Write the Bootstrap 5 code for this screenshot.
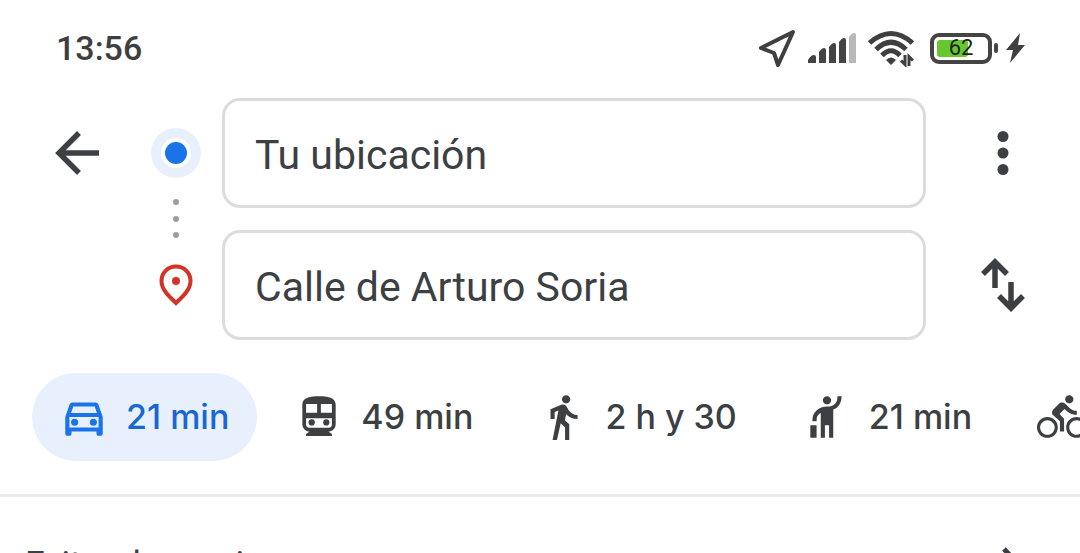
<!DOCTYPE html>
<html lang="es">
<head>
<meta charset="utf-8">
<meta name="viewport" content="width=device-width, initial-scale=1">
<title>Cómo llegar</title>
<link href="https://cdn.jsdelivr.net/npm/bootstrap@5.3.0/dist/css/bootstrap.min.css" rel="stylesheet">
<style>
  body { font-family: Roboto, sans-serif; color: #3c4043; background: #fff; }
  svg { display: block; flex: none; }
  .status-bar { height: 98px; padding: 0 54px 2px 56px; color: #3f3f3f; }
  .clock { font-size: 34px; font-weight: 500; line-height: 40px; }
  .status-icons { gap: 12px; }
  .battery { width: 62px; height: 31px; border: 4px solid #444; border-radius: 9px; }
  .battery-level { width: 31px; height: 17px; left: 3px; top: 3px; border-radius: 3px; background: #66c72e; }
  .battery-text { font-size: 22px; line-height: 24px; color: #222; }
  .battery-cap { width: 4px; height: 10px; margin: 0 8px 0 2px; border-radius: 2px; background: #444; }
  .back-col { width: 130px; height: 110px; padding-left: 55px; }
  .stops-col { width: 92px; }
  .stop-box { height: 110px; }
  .stop-dots { height: 22px; }
  .fields { gap: 22px; }
  .stop-field { height: 110px; border: 3px solid #dadce0; border-radius: 18px; padding: 4px 30px 0; font-size: 41px; line-height: 48px; color: #3c4043; }
  .actions-col { width: 154px; gap: 22px; }
  .actions-col .btn { height: 110px; }
  .plain-btn { border: 0; border-radius: 0; padding: 0; color: #3c4043; }
  .modes { gap: 10px; padding: 33px 0 33px 32px; border-bottom: 3px solid #e8eaed; }
  .mode { height: 88px; padding: 0 28px 0 27px; gap: 17px; border: 0; border-radius: 44px; color: #3c4043; font-family: Inter, sans-serif; font-size: 34px; line-height: 44px; font-weight: 500; }
  .mode.active, .mode.active:hover { background: #e8f0fe; color: #1967d2; }
  .mode.active svg { color: #1a73e8; }
  .option-row { padding: 44px 58px 40px 25px; font-size: 35px; line-height: 48px; color: #3c4043; }
</style>
</head>
<body>
<div class="vh-100 overflow-hidden d-flex flex-column">
  <header class="status-bar d-flex align-items-center justify-content-between flex-shrink-0">
    <div class="clock">13:56</div>
    <div class="status-icons d-flex align-items-center">
      <svg width="38" height="38" viewBox="0 0 38 38" fill="none" stroke="#3f3f3f" stroke-width="4" stroke-linejoin="round"><path d="M35 3 3 19l13 5 4 12z"/></svg>
      <svg width="48" height="32" viewBox="0 0 48 32" fill="#444"><path d="M0 31v-3q3-5 6-5 2 0 2 2v6zM11 31V20q3-4 5-4 2 0 2 2v13zM21 31V15q3-4 5-4 2 0 2 2v18zM31 31V10q3-4 5-4 2 0 2 2v23z"/><path d="M41 31V5q3-4 5-4 2 0 2 2v28z" fill="#b8b8b8"/></svg>
      <svg width="46" height="38" viewBox="0 0 46 38" fill="none" stroke="#3f3f3f" stroke-width="5"><path d="M1.500 14Q23-5 44.500 14M8 20.500Q23 6 38 20.500M14 26.500Q23 17 32 26.500"/><path d="M18 31q5-5 10 0l-5 5z" fill="#3f3f3f" stroke="none"/><path d="m33 31.500 4 4V26M45 31.500l-4-4V37" stroke-width="3"/></svg>
      <div class="d-flex align-items-center ms-1">
        <div class="battery position-relative d-flex justify-content-center align-items-center">
          <span class="battery-level position-absolute"></span><span class="battery-text position-relative">62</span>
        </div>
        <span class="battery-cap"></span>
        <svg width="20" height="30" viewBox="0 0 20 30" fill="#3f3f3f"><path d="M14 0 0 17h7L4 30l15-18h-7z"/></svg>
      </div>
    </div>
  </header>

  <main>
    <form class="d-flex">
      <div class="back-col d-flex align-items-center">
        <button type="button" class="btn plain-btn" aria-label="Atrás"><svg width="46" height="46" viewBox="0 0 46 46" fill="none" stroke="currentColor" stroke-width="5.500"><path d="M44 23H4M24 3 4 23l20 20"/></svg></button>
      </div>
      <div class="stops-col d-flex flex-column align-items-center">
        <div class="stop-box d-flex align-items-center"><svg width="50" height="50" viewBox="0 0 50 50"><circle cx="25" cy="25" r="25" fill="#e8f0fe"/><circle cx="25" cy="25" r="15" fill="#fff"/><circle cx="25" cy="25" r="11" fill="#1a73e8"/></svg></div>
        <div class="stop-dots d-flex align-items-center"><svg width="8" height="42" viewBox="0 0 8 42" fill="#9aa0a6"><circle cx="4" cy="4" r="3"/><circle cx="4" cy="21" r="3"/><circle cx="4" cy="37" r="3"/></svg></div>
        <div class="stop-box d-flex align-items-center"><svg width="36" height="44" viewBox="0 0 36 44"><path d="M18 3.500C10 3.500 3.500 9.500 3.500 18c0 8 6 14 14.500 22 8.500-8 14.500-14 14.500-22C32.500 9.500 26 3.500 18 3.500z" fill="none" stroke="#d33427" stroke-width="4"/><circle cx="18" cy="18" r="4" fill="#d33427"/></svg></div>
      </div>
      <div class="fields flex-grow-1 d-flex flex-column">
        <input type="text" class="form-control stop-field" aria-label="Origen" value="Tu ubicación">
        <input type="text" class="form-control stop-field" aria-label="Destino" value="Calle de Arturo Soria">
      </div>
      <div class="actions-col d-flex flex-column align-items-center">
        <button type="button" class="btn plain-btn" aria-label="Más opciones"><svg width="12" height="46" viewBox="0 0 12 46" fill="currentColor"><circle cx="6" cy="6.500" r="5.500"/><circle cx="6" cy="23" r="5.500"/><circle cx="6" cy="39.500" r="5.500"/></svg></button>
        <button type="button" class="btn plain-btn" aria-label="Invertir ruta"><svg width="44" height="56" viewBox="0 0 44 56" fill="none" stroke="currentColor" stroke-width="5.500"><path d="M14 31V5M2 17 14 5l12 12M30 25v26M18 39l12 12 12-12"/></svg></button>
      </div>
    </form>

    <nav class="modes d-flex overflow-hidden" aria-label="Modo de transporte">
      <button type="button" class="btn mode active d-flex align-items-center flex-shrink-0 text-nowrap"><svg width="50" height="50" viewBox="0 0 24 24" fill="currentColor"><path d="M18.920 6.010C18.720 5.420 18.160 5 17.500 5h-11c-.66 0-1.210.42-1.420 1.010L3 12v8c0 .55.45 1 1 1h1c.55 0 1-.45 1-1v-1h12v1c0 .55.45 1 1 1h1c.55 0 1-.45 1-1v-8l-2.080-5.990zM6.850 7h10.290l1.080 3.110H5.770L6.850 7zM19 17H5v-5h14v5z"/><circle cx="7.500" cy="14.500" r="1.700"/><circle cx="16.500" cy="14.500" r="1.700"/></svg>21 min</button>
      <button type="button" class="btn mode d-flex align-items-center flex-shrink-0 text-nowrap"><svg width="50" height="50" viewBox="0 0 24 24" fill="currentColor"><path fill-rule="evenodd" d="M12 2c4 0 8 .5 8 4v9.500C20 17.400 18.400 19 16.500 19l1.700 1.200v.9H5.800v-.9L7.500 19C5.600 19 4 17.400 4 15.500V6c0-3.500 4-4 8-4zM5.800 5.800v4.100h5.300V5.800zm7.100 0v4.100h5.300V5.800zM5.800 12.600v3q0 1.500 1.500 1.500h9.400q1.500 0 1.500-1.500v-3z"/><circle cx="8.500" cy="14.600" r="1.500"/><circle cx="15.500" cy="14.600" r="1.500"/></svg>49 min</button>
      <button type="button" class="btn mode d-flex align-items-center flex-shrink-0 text-nowrap"><svg width="50" height="50" viewBox="0 0 24 24" fill="currentColor"><path d="M13.500 5.500c1.100 0 2-.9 2-2s-.9-2-2-2-2 .9-2 2 .9 2 2 2zM9.800 8.900 7 23h2.100l1.800-8 2.100 2v6h2v-7.500l-2.100-2 .6-3C14.800 12 16.800 13 19 13v-2c-1.900 0-3.500-1-4.300-2.400l-1-1.600c-.4-.6-1-1-1.700-1-.3 0-.5.1-.8.1L6 8.300V13h2V9.600l1.800-.7"/></svg>2 h y 30</button>
      <button type="button" class="btn mode d-flex align-items-center flex-shrink-0 text-nowrap"><svg width="50" height="50" viewBox="0 0 24 24" fill="currentColor"><path d="M12 6c-1.100 0-2-.9-2-2s.9-2 2-2 2 .9 2 2-.9 2-2 2zm5-4h2v.4c-.1 2.200-.8 3.900-2.300 5.100-.5.4-1.100.7-1.700.9V22h-2v-6h-2v6H9V10.100c-.3.1-.5.2-.6.3-.9.7-1.390 1.600-1.400 3.100v.5H5v-.5c0-2 .71-3.590 2.110-4.790C8.210 7.810 10 7 12 7s2.680-.46 3.480-1.060C16.480 5.140 17 4 17 2.500V2zM4 16h3v6H4v-6z"/></svg>21 min</button>
      <button type="button" class="btn mode d-flex align-items-center flex-shrink-0 text-nowrap" aria-label="Bicicleta"><svg width="50" height="50" viewBox="0 0 24 24" fill="currentColor"><path d="M15.500 5.500c1.100 0 2-.9 2-2s-.9-2-2-2-2 .9-2 2 .9 2 2 2zM5 12c-2.800 0-5 2.200-5 5s2.200 5 5 5 5-2.200 5-5-2.200-5-5-5zm0 8.500c-1.900 0-3.500-1.600-3.500-3.500s1.600-3.500 3.500-3.500 3.500 1.600 3.500 3.500-1.600 3.500-3.500 3.500zm5.800-10 2.400-2.400.8.8c1.300 1.300 3 2.100 5.100 2.100V9c-1.500 0-2.700-.6-3.600-1.500l-1.900-1.900c-.5-.4-1-.6-1.600-.6s-1.100.2-1.400.6L7.800 8.400c-.4.4-.6.9-.6 1.400 0 .6.2 1.100.6 1.400L11 14v5h2v-6.200l-2.200-2.300zM19 12c-2.800 0-5 2.200-5 5s2.200 5 5 5 5-2.200 5-5-2.200-5-5-5zm0 8.500c-1.900 0-3.500-1.600-3.500-3.500s1.600-3.500 3.500-3.500 3.500 1.600 3.500 3.500-1.600 3.500-3.500 3.500z"/></svg></button>
    </nav>

    <button type="button" class="btn plain-btn option-row w-100 d-flex align-items-center justify-content-between">
      <span>Evitar denuncias</span>
      <svg width="20" height="36" viewBox="0 0 20 36" fill="none" stroke="currentColor" stroke-width="5"><path d="m2 2 15 16L2 34"/></svg>
    </button>
  </main>
</div>
<script src="https://cdn.jsdelivr.net/npm/bootstrap@5.3.0/dist/js/bootstrap.bundle.min.js"></script>
</body>
</html>
